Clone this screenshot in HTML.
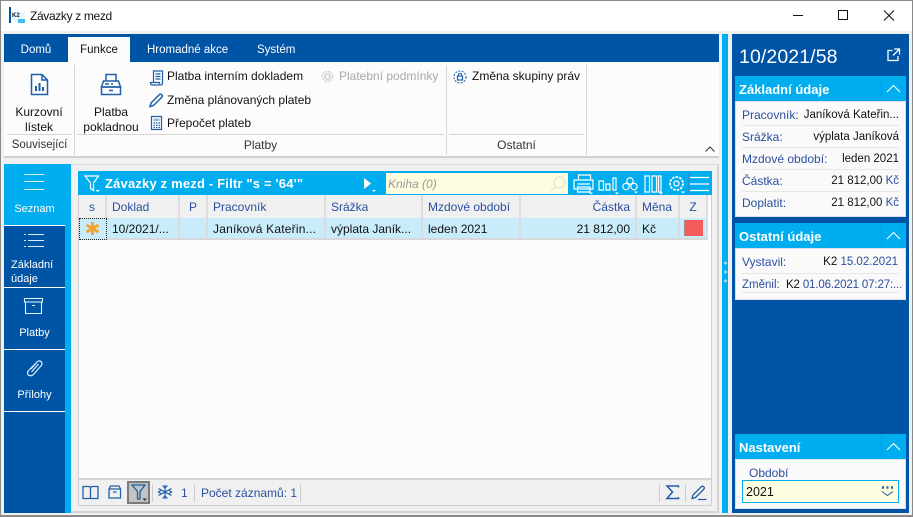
<!DOCTYPE html>
<html><head><meta charset="utf-8"><style>
html,body{margin:0;padding:0;width:913px;height:517px;overflow:hidden;background:#f0f0f0;font-family:"Liberation Sans",sans-serif;font-size:12px;color:#111}
div,span{position:absolute;white-space:nowrap;box-sizing:border-box}
svg{position:absolute;overflow:visible}
.c{text-align:center}.r{text-align:right}
.b{background:#0054a6}.l{background:#00aeef}
.w{color:#fff}
.lab{color:#2a4fa0}
.h{font-weight:bold;color:#fff;font-size:13px}
.v{font-size:11.5px}
.hl{height:1px;background:#e6e6e6}
.col{top:195px;height:23px;line-height:24px;color:#2a4fa0;padding-left:5px;border-right:2px solid #dcdcdc;background:#f0f0f0}
.cell{top:218px;height:22px;line-height:23px;padding-left:5px;border-right:2px solid #dcdcdc;background:#c8ecfa;border-bottom:2px solid #d8d8d8}
</style></head><body>
<!-- title bar -->
<div style="left:0;top:0;width:913px;height:31px;background:#fff;border-top:1px solid #8a8a8a"></div>
<div style="left:0;top:0;width:1px;height:517px;background:#8a8a8a"></div>
<div style="left:912px;top:0;width:1px;height:517px;background:#8a8a8a"></div>
<div style="left:0;top:515px;width:913px;height:2px;background:#8a8a8a"></div>
<div style="left:9px;top:7px;width:2px;height:16px;background:#0054a6"></div>
<div style="left:12px;top:12px;width:13px;height:9px;background:#e8f4fb;color:#123;font-size:6px;font-weight:bold;line-height:9px">K2</div>
<div style="left:18px;top:19px;width:7px;height:4px;background:#3fc0ee"></div>
<div style="left:30px;top:7px;font-size:12px;line-height:18px;letter-spacing:-.35px;color:#111">Závazky z mezd</div>
<svg style="left:790px;top:9px" width="115" height="14" fill="none" stroke="#111" stroke-width="1">
<path d="M3 6.5H13"/><rect x="48.5" y="1.5" width="9" height="9"/><path d="M94 1.5L104 11.5M104 1.5L94 11.5"/></svg>

<!-- ribbon -->
<div class="b" style="left:4px;top:34px;width:715px;height:28px"></div>
<div style="left:68px;top:37px;width:62px;height:25px;background:#fcfcfc"></div>
<div class="w c" style="left:4px;top:43px;width:64px;line-height:14px;font-size:11.5px">Domů</div>
<div class="c" style="left:68px;top:43px;width:62px;line-height:14px;font-size:11.5px">Funkce</div>
<div class="w" style="left:147px;top:43px;line-height:14px;font-size:11.5px">Hromadné akce</div>
<div class="w" style="left:257px;top:43px;line-height:14px;font-size:11.5px">Systém</div>
<div style="left:4px;top:62px;width:715px;height:96px;background:#fcfcfc;border-bottom:2px solid #d0d0d0"></div>
<div style="left:74px;top:65px;width:1px;height:90px;background:#d6d6d6"></div>
<div style="left:446px;top:65px;width:1px;height:90px;background:#d6d6d6"></div>
<div style="left:586px;top:65px;width:1px;height:90px;background:#d6d6d6"></div>
<div style="left:7px;top:134px;width:65px;height:1px;background:#d6d6d6"></div>
<div style="left:77px;top:134px;width:367px;height:1px;background:#d6d6d6"></div>
<div style="left:449px;top:134px;width:135px;height:1px;background:#d6d6d6"></div>
<div class="c" style="left:4px;top:105px;width:70px;line-height:15px">Kurzovní<br>lístek</div>
<div class="c" style="left:76px;top:105px;width:70px;line-height:15px">Platba<br>pokladnou</div>
<div style="left:167px;top:69px;line-height:15px">Platba interním dokladem</div>
<div style="left:167px;top:93px;line-height:15px">Změna plánovaných plateb</div>
<div style="left:167px;top:116px;line-height:15px">Přepočet plateb</div>
<div style="left:339px;top:69px;line-height:15px;color:#a8a8a8">Platební podmínky</div>
<div style="left:472px;top:69px;line-height:15px">Změna skupiny práv</div>
<div class="c" style="left:4px;top:138px;width:71px;line-height:15px;color:#333;font-size:11.5px">Související</div>
<div class="c" style="left:75px;top:138px;width:371px;line-height:15px;color:#333">Platby</div>
<div class="c" style="left:447px;top:138px;width:139px;line-height:15px;color:#333">Ostatní</div>
<svg style="left:704px;top:145px" width="12" height="8" fill="none" stroke="#333"><path d="M1.5 6.5L6 2L10.5 6.5"/></svg>
<!-- ribbon icons -->
<svg style="left:30px;top:73px" width="20" height="24" fill="none" stroke="#1f5fa8" stroke-width="1.5"><path d="M1.5 1.5H12L17.5 7V21.500H1.500ZM12 1.500V7H17.500"/><path d="M6 18V13M9.500 18V10M13 18V14" stroke-width="2"/></svg>
<svg style="left:100px;top:73px" width="22" height="24" fill="none" stroke="#1f5fa8" stroke-width="1.500"><path d="M6 8V1.500H16V8"/><path d="M3.500 8H18.500L20.500 14H1.500Z"/><rect x="1.500" y="14" width="19" height="7.500"/><path d="M5 11H9M11 11H13M9 17.500H13"/></svg>
<svg style="left:150px;top:70px" width="14" height="16" fill="none" stroke="#1f5fa8" stroke-width="1.200"><path d="M3.500 12V1H12.500V13C12.500 14.500 11.500 15 10.500 15H2C.8 15 .5 14 .5 12.500H9.500V14"/><path d="M5.500 4H10.500M5.500 6.500H10.500M5.500 9H10.500"/></svg>
<svg style="left:149px;top:93px" width="14" height="15" fill="none" stroke="#1f5fa8" stroke-width="1.500"><path d="M1 13.500L2 10L10 2C11 1 12 1 12.800 1.800C13.500 2.500 13.500 3.500 12.500 4.500L4.500 12.500Z"/></svg>
<svg style="left:151px;top:116px" width="12" height="15" fill="none" stroke="#1f5fa8" stroke-width="1.200"><rect x=".5" y=".5" width="10" height="13"/><rect x="2.500" y="2.500" width="6" height="2.500" fill="#8fb8dd" stroke="none"/><path d="M2.500 7H4M5 7H6.500M7.500 7H9M2.500 9.300H4M5 9.300H6.500M7.500 9.300H9M2.500 11.500H4M5 11.500H6.500M7.500 11.500H9"/></svg>
<svg style="left:321px;top:70px" width="13" height="13" fill="none" stroke="#cfcfcf" stroke-width="1.600"><circle cx="6.500" cy="6.500" r="5" stroke-dasharray="2 1"/><circle cx="6.500" cy="6.500" r="2.500"/></svg>
<svg style="left:453px;top:70px" width="14" height="14" fill="none" stroke="#1f5fa8"><circle cx="7" cy="7" r="6" stroke-dasharray="2 1.300"/><rect x="4.500" y="6" width="5" height="4" stroke-width="1.200"/><path d="M5.500 6V4.500C5.500 3 8.500 3 8.500 4.500V6"/></svg>

<!-- left nav -->
<div class="b" style="left:4px;top:164px;width:61px;height:349px"></div>
<div class="l" style="left:65px;top:164px;width:6px;height:349px"></div>
<div class="l" style="left:4px;top:164px;width:61px;height:61px"></div>
<div style="left:4px;top:225px;width:61px;height:1px;background:#fff"></div>
<div style="left:4px;top:287px;width:61px;height:1px;background:#fff"></div>
<div style="left:4px;top:349px;width:61px;height:1px;background:#fff"></div>
<div style="left:4px;top:411px;width:61px;height:1px;background:#fff"></div>
<svg style="left:24px;top:174px" width="21" height="16" stroke="#d8f2fc" stroke-width="1"><path d="M0 .5H20M0 7.500H20M0 15.500H20"/></svg>
<div class="w c" style="left:4px;top:202px;width:61px;line-height:15px;font-size:11px">Seznam</div>
<svg style="left:24px;top:234px" width="21" height="14" stroke="#d8f2fc" stroke-width="1"><path d="M4 .5H20M4 6.500H20M4 12.500H20"/><path d="M0 .5H2M0 6.500H2M0 12.500H2"/></svg>
<div class="w" style="left:11px;top:258px;line-height:14px;font-size:11px">Základní<br>údaje</div>
<svg style="left:24px;top:298px" width="20" height="18" fill="none" stroke="#d8f2fc" stroke-width="1.100"><rect x=".5" y=".5" width="18" height="3.500"/><path d="M1.500 4V15.500H17.500V4M8 7.500H11"/></svg>
<div class="w c" style="left:4px;top:326px;width:61px;line-height:15px;font-size:11px">Platby</div>
<svg style="left:26px;top:359px" width="18" height="20" fill="none" stroke="#d8f2fc" stroke-width="1.200"><path d="M5 10L11 3C13 1 16 2 16 4.500C16 6 15 7 14 8L7.500 15.500C5.500 17.500 1.500 17 1.500 14C1.500 12.500 2.500 11.500 3 11L10.500 3.500M5.500 13L12.500 5"/></svg>
<div class="w c" style="left:4px;top:388px;width:61px;line-height:15px;font-size:11px">Přílohy</div>

<!-- main panel -->
<div style="left:71px;top:164px;width:648px;height:349px;background:#f0f0f0;border-top:1px solid #d8d8d8;border-right:2px solid #d4d4d4;border-bottom:2px solid #d4d4d4"></div>
<div style="left:78px;top:171px;width:634px;height:335px;background:#fcfcfc;border:1px solid #cfcfcf"></div>
<div class="l" style="left:78px;top:171px;width:634px;height:24px"></div>
<svg style="left:84px;top:175px" width="18" height="17" fill="none" stroke="#fff" stroke-width="1.200"><path d="M1 1H14.500L9.500 8V15.500L6.500 13.500V8Z"/><path d="M11.500 15H16L13.700 17Z" fill="#fff" stroke="none"/></svg>
<div class="h" style="left:105px;top:177px;line-height:14px;letter-spacing:.18px">Závazky z mezd - Filtr "s = '64'"</div>
<svg style="left:364px;top:178px" width="14" height="15" fill="#fff"><path d="M0 0L7 5.500L0 11Z"/><path d="M8 12H12L10 14Z"/></svg>
<div style="left:386px;top:173px;width:182px;height:21px;background:#fffde0;color:#999;font-style:italic;line-height:22px;padding-left:2px">Kniha (0)</div>
<svg style="left:550px;top:176px" width="16" height="16" fill="none" stroke="#e4e6cc" stroke-width="1.300"><circle cx="9.500" cy="6.500" r="5.500"/><path d="M5.500 10.500L1 15"/></svg>
<svg style="left:573px;top:173px" width="138" height="22" fill="none" stroke="#fff" stroke-width="1.200">
<path d="M5.500 6V2H17.500V6M1 7H20V16H1ZM4.500 11H17M4.500 14H17V19H4.500Z"/>
<path d="M26 8H30.500V17H26ZM33 11H37V17H33ZM40 5H43V17H40Z"/>
<circle cx="57" cy="8" r="3.200"/><circle cx="53" cy="13.500" r="3.200"/><circle cx="61" cy="13.500" r="3.200"/>
<path d="M72 3H76.500V19H72ZM79 3H83.500V19H79ZM85.500 3H88V19H85.500Z"/>
<circle cx="103.500" cy="10.500" r="6.500" stroke-dasharray="2.500 1.200" stroke-width="1.800"/><circle cx="103.500" cy="10.500" r="2.500"/>
<path d="M117 4.500H136M117 11H136M117 17.500H136"/>
<path d="M16 19.500H20L18 21.500ZM42 19.500H46L44 21.500ZM61 18.500H65L63 20.500ZM86 19.500H90L88 21.500ZM108 18.500H112L110 20.500Z" fill="#fff" stroke="none"/></svg>
<div style="left:688px;top:173px;width:1px;height:21px;background:#1e90cc"></div>

<!-- grid -->
<div class="col c" style="left:79px;width:28px;padding:0">s</div>
<div class="col" style="left:107px;width:73px">Doklad</div>
<div class="col c" style="left:180px;width:28px;padding:0">P</div>
<div class="col" style="left:208px;width:118px">Pracovník</div>
<div class="col" style="left:326px;width:97px">Srážka</div>
<div class="col" style="left:423px;width:98px">Mzdové období</div>
<div class="col r" style="left:521px;width:116px;padding-right:5px">Částka</div>
<div class="col" style="left:637px;width:43px">Měna</div>
<div class="col c" style="left:680px;width:28px;padding:0">Z</div>
<div class="cell" style="left:79px;width:28px;padding:0;border:1px dotted #222"></div>
<div class="cell" style="left:107px;width:73px">10/2021/...</div>
<div class="cell" style="left:180px;width:28px"></div>
<div class="cell" style="left:208px;width:118px;letter-spacing:.2px">Janíková Kateřin...</div>
<div class="cell" style="left:326px;width:97px">výplata Janík...</div>
<div class="cell" style="left:423px;width:98px">leden 2021</div>
<div class="cell r" style="left:521px;width:116px;padding-right:5px">21 812,00</div>
<div class="cell" style="left:637px;width:43px">Kč</div>
<div class="cell" style="left:680px;width:28px"></div>
<div style="left:684px;top:220px;width:19px;height:16px;background:#f45a5a;border-left:1px solid #a88"></div>
<svg style="left:85px;top:221px" width="15" height="15" stroke="#f7a42c" stroke-width="3"><path d="M7.500 1V14M1.500 4L13.500 11M13.500 4L1.500 11"/></svg>

<!-- bottom bar -->
<div style="left:79px;top:478px;width:632px;height:27px;background:#f0f0f0;border-top:2px solid #d4d4d4"></div>
<svg style="left:82px;top:485px" width="18" height="15" fill="none" stroke="#1f5fa8" stroke-width="1.300"><path d="M1 1.500H6.500C8 1.500 8.500 2.500 8.500 3.500V13.500H1ZM16 1.500H10.500C9 1.500 8.500 2.500 8.500 3.500V13.500H16Z"/></svg>
<svg style="left:108px;top:485px" width="14" height="15" fill="none" stroke="#1f5fa8" stroke-width="1.300"><path d="M1 4L2.500 1H11L12.500 4V13H1ZM1 4H12.500M5 7H8.500"/></svg>
<div style="left:127px;top:481px;width:23px;height:23px;background:#c3c3c3;border:2px solid #7a7a7a"></div>
<svg style="left:131px;top:484px" width="18" height="18" fill="none" stroke="#1f5fa8" stroke-width="1.300"><path d="M1 1H14L9 7.500V15H6.500V7.500Z"/><path d="M11.500 14.500H16L13.700 17Z" fill="#244" stroke="none"/></svg>
<div style="left:152px;top:484px;width:1px;height:18px;background:#ccc"></div>
<svg style="left:157px;top:484px" width="16" height="16" fill="none" stroke="#1f5fa8" stroke-width="1.200"><path d="M8 1V15M1.500 4.500L14.500 11.500M14.500 4.500L1.500 11.500M5.500 1.500L8 4L10.500 1.500M5.500 14.500L8 12L10.500 14.500M1 8L4 6.500M15 8L12 6.500M1 8L4 9.500M15 8L12 9.500"/></svg>
<div style="left:181px;top:486px;line-height:15px;color:#2a4fa0">1</div>
<div style="left:194px;top:484px;width:1px;height:18px;background:#ccc"></div>
<div style="left:201px;top:486px;line-height:15px;color:#2a4fa0">Počet záznamů: 1</div>
<div style="left:300px;top:484px;width:1px;height:18px;background:#ccc"></div>
<div style="left:659px;top:484px;width:1px;height:18px;background:#ccc"></div>
<svg style="left:666px;top:485px" width="13" height="15" fill="none" stroke="#1f5fa8" stroke-width="1.500"><path d="M12.500 2.500V1H1L6.500 7L1 13.500H12.500V12"/></svg>
<div style="left:685px;top:484px;width:1px;height:18px;background:#ccc"></div>
<svg style="left:691px;top:485px" width="16" height="15" fill="none" stroke="#1f5fa8" stroke-width="1.300"><path d="M1 13.500L2 10L10 2C11 1 12 1 12.800 1.800C13.500 2.500 13.500 3.500 12.500 4.500L4.500 12.500ZM7 14.500H15.500"/></svg>

<!-- right panel -->
<div class="l" style="left:722px;top:34px;width:6px;height:479px"></div>
<svg style="left:724px;top:260px" width="3" height="24" fill="#9fdcf6"><circle cx="1.500" cy="3" r="1.500"/><circle cx="1.500" cy="12" r="1.500"/><circle cx="1.500" cy="21" r="1.500"/></svg>
<div class="b" style="left:732px;top:34px;width:177px;height:479px"></div>
<div class="w" style="left:739px;top:46px;font-size:19.500px;line-height:22px;letter-spacing:.1px">10/2021/58</div>
<svg style="left:887px;top:48px" width="14" height="14" fill="none" stroke="#fff" stroke-width="1.300"><path d="M5.500 2.500H1V12.500H11V8M7 1H12.500V6.500M12.500 1L6 7.500"/></svg>

<div class="l" style="left:735px;top:76px;width:171px;height:25px"></div>
<div class="h" style="left:739px;top:83px;line-height:14px">Základní údaje</div>
<div style="left:881px;top:78px;width:1px;height:21px;background:#1e90cc"></div>
<svg style="left:886px;top:84px" width="15" height="9" fill="none" stroke="#fff" stroke-width="1.100"><path d="M1 8L7.500 1.500L14 8"/></svg>
<div style="left:735px;top:101px;width:171px;height:116px;background:#fafafa;border:1px solid #dde"></div>
<div class="lab" style="left:742px;top:108px;line-height:15px">Pracovník:</div><div class="r v" style="left:790px;width:109px;top:108px;line-height:15px">Janíková Kateřin...</div>
<div class="hl" style="left:742px;top:125px;width:157px"></div>
<div class="lab" style="left:742px;top:130px;line-height:15px">Srážka:</div><div class="r v" style="left:790px;width:109px;top:130px;line-height:15px">výplata Janíková</div>
<div class="hl" style="left:742px;top:147px;width:157px"></div>
<div class="lab" style="left:742px;top:152px;line-height:15px">Mzdové období:</div><div class="r v" style="left:830px;width:69px;top:152px;line-height:15px">leden 2021</div>
<div class="hl" style="left:742px;top:169px;width:157px"></div>
<div class="lab" style="left:742px;top:174px;line-height:15px">Částka:</div><div class="r v" style="left:790px;width:109px;top:174px;line-height:15px">21 812,00 <span class="lab" style="position:static">Kč</span></div>
<div class="hl" style="left:742px;top:191px;width:157px"></div>
<div class="lab" style="left:742px;top:196px;line-height:15px">Doplatit:</div><div class="r v" style="left:790px;width:109px;top:196px;line-height:15px">21 812,00 <span class="lab" style="position:static">Kč</span></div>

<div class="l" style="left:735px;top:223px;width:171px;height:25px"></div>
<div class="h" style="left:739px;top:230px;line-height:14px">Ostatní údaje</div>
<div style="left:881px;top:225px;width:1px;height:21px;background:#1e90cc"></div>
<svg style="left:886px;top:231px" width="15" height="9" fill="none" stroke="#fff" stroke-width="1.100"><path d="M1 8L7.500 1.500L14 8"/></svg>
<div style="left:735px;top:248px;width:171px;height:52px;background:#fafafa;border:1px solid #dde"></div>
<div class="lab" style="left:742px;top:255px;line-height:15px">Vystavil:</div><div class="r v" style="left:790px;width:108px;top:255px;line-height:15px">K2 <span class="lab" style="position:static">15.02.2021</span></div>
<div class="hl" style="left:742px;top:273px;width:157px"></div>
<div class="lab" style="left:742px;top:278px;line-height:15px;font-size:11.500px">Změnil:</div><div style="left:786px;top:278px;line-height:15px;font-size:11.500px;letter-spacing:-.15px">K2 <span class="lab" style="position:static">01.06.2021 07:27:...</span></div>
<div class="hl" style="left:742px;top:292px;width:157px"></div>

<div class="l" style="left:735px;top:434px;width:171px;height:25px"></div>
<div class="h" style="left:739px;top:441px;line-height:14px">Nastavení</div>
<div style="left:881px;top:436px;width:1px;height:21px;background:#1e90cc"></div>
<svg style="left:886px;top:442px" width="15" height="9" fill="none" stroke="#fff" stroke-width="1.100"><path d="M1 8L7.500 1.500L14 8"/></svg>
<div style="left:735px;top:459px;width:171px;height:50px;background:#fafafa;border:1px solid #dde"></div>
<div class="lab" style="left:749px;top:466px;line-height:15px">Období</div>
<div style="left:742px;top:480px;width:157px;height:23px;background:#fffde0;border:1px solid #00aeef;line-height:23px;padding-left:3px;font-size:12.500px">2021</div>
<svg style="left:881px;top:486px" width="13" height="11" fill="none" stroke="#1f5fa8"><path d="M1 1.500H3M5.500 1.500H7.500M10 1.500H12" stroke-width="2.500"/><path d="M1 5.500L6.500 9.500L12 5.500"/></svg>
</body></html>
